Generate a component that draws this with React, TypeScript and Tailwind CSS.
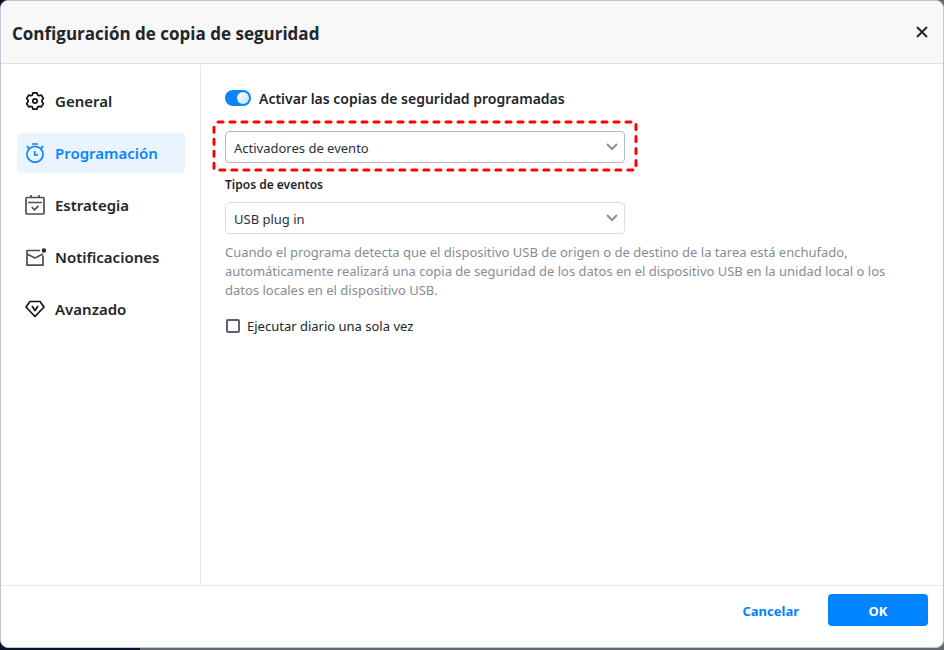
import { useState } from "react";
import type { ReactNode } from "react";
import { clsx } from "clsx";

const iconProps = {
  width: 20,
  height: 20,
  viewBox: "0 0 20 20",
  fill: "none",
  stroke: "currentColor",
  strokeWidth: 1.7,
  "aria-hidden": true,
};

const GearIcon = () => (
  <svg {...iconProps} className="text-[#111418]" strokeLinejoin="round">
    <path d="M8 1.800h4l.6 2.100 1.500.8 2.300-.5 2 3.200-1.400 1.600v2l1.400 1.600-2 3.200-2.300-.5-1.500.8-.6 2.100H8l-.6-2.100-1.500-.8-2.300.5-2-3.200L3 11V9L1.600 7.400l2-3.200 2.300.5 1.500-.8z" />
    <circle cx="10" cy="10" r="2.200" />
  </svg>
);

const TimerIcon = () => (
  <svg {...iconProps}>
    <circle cx="10" cy="11.300" r="8" />
    <path d="M7 1h6M1.800 3.200l2.700 2.600M18.200 3.200l-2.700 2.600M9.700 8v4h3.500" />
  </svg>
);

const CalendarIcon = () => (
  <svg {...iconProps} className="text-[#4a4e55]">
    <rect x="1" y="2.500" width="18" height="16.500" rx="1" />
    <path d="M3 7.500h14M6 0v3M14 0v3M6.700 12l2.800 2.800 4-4" />
  </svg>
);

const MailIcon = () => (
  <svg {...iconProps} className="overflow-visible text-[#4a4e55]">
    <path d="M15 3.500H2v14.700h16V8.500M2 7l8 4 8-4" strokeLinejoin="round" />
    <circle cx="18.900" cy="3.500" r="2.200" fill="#22262b" stroke="none" />
  </svg>
);

const DiamondIcon = () => (
  <svg {...iconProps} className="text-[#111418]" strokeLinejoin="round">
    <path d="M5 2.500h10l4 5.500-9 9.500L1 8z" />
    <path d="M7 7l3 4.500L13 7" />
  </svg>
);

const SECTIONS: { id: string; label: string; icon: ReactNode }[] = [
  { id: "general", label: "General", icon: <GearIcon /> },
  { id: "schedule", label: "Programación", icon: <TimerIcon /> },
  { id: "strategy", label: "Estrategia", icon: <CalendarIcon /> },
  { id: "notifications", label: "Notificaciones", icon: <MailIcon /> },
  { id: "advanced", label: "Avanzado", icon: <DiamondIcon /> },
];

function SelectField({ id, label, options, className }: {
  id: string;
  label?: string;
  options: string[];
  className?: string;
}) {
  return (
    <div className="relative">
      <select
        id={id}
        aria-label={label}
        className={clsx("block h-8 w-full appearance-none rounded border bg-white pl-2 pr-8 pt-1 text-[13px] text-[#2b3038]", className)}
      >
        {options.map((o) => (
          <option key={o}>{o}</option>
        ))}
      </select>
      <svg
        className="pointer-events-none absolute right-[7px] top-[10px] text-[#8a929e]"
        width="12"
        height="12"
        viewBox="0 0 12 12"
        fill="none"
        stroke="currentColor"
        strokeWidth="2"
        aria-hidden
      >
        <path d="M1 3l5 5 5-5" />
      </svg>
    </div>
  );
}

export default function App() {
  const [section, setSection] = useState("schedule");
  const [enabled, setEnabled] = useState(true);
  const [onceDaily, setOnceDaily] = useState(false);

  return (
    <div className="flex min-h-screen flex-col bg-[linear-gradient(90deg,#07122c_140px,#646974_140px)] pb-[2px] font-['Noto_Sans','Open_Sans',sans-serif] text-[#22262b]">
      <div className="flex flex-1 flex-col overflow-hidden rounded-lg border border-[#c3c5d3] bg-white">

        {/* Header */}
        <header className="flex h-[63px] items-center justify-between border-b border-[#e0e1e3] bg-[#f8f8f8] pl-[11px] pr-[15px]">
          <h1 className="pt-1 font-['Open_Sans','Noto_Sans',sans-serif] text-[17px] font-bold">Configuración de copia de seguridad</h1>
          <button type="button" aria-label="Cerrar">
            <svg width="12" height="12" viewBox="0 0 12 12" stroke="currentColor" strokeWidth="2" aria-hidden>
              <path d="M1 1l10 10M11 1L1 11" />
            </svg>
          </button>
        </header>

        <div className="flex flex-1">
          {/* Sections */}
          <nav className="mt-px flex w-[200px] shrink-0 flex-col gap-3 border-r border-[#e6e7e9] px-4 py-4">
            {SECTIONS.map((s) => (
              <button
                key={s.id}
                type="button"
                onClick={() => setSection(s.id)}
                className={clsx(
                  "flex h-10 w-[168px] items-center gap-[10px] rounded-sm pl-2 text-[15px] font-semibold",
                  section === s.id && "bg-[#eaf4ff] text-[#0a84ff]"
                )}
              >
                {s.icon}
                {s.label}
              </button>
            ))}
          </nav>

          {/* Schedule settings */}
          <main className="flex-1 px-6 pt-6">
            <label className="flex h-5 items-center gap-2 text-sm font-semibold">
              <input
                type="checkbox"
                role="switch"
                checked={enabled}
                onChange={(e) => setEnabled(e.target.checked)}
                className="relative h-4 w-[26px] appearance-none rounded-full bg-gray-300 before:absolute before:left-0.5 before:top-0.5 before:size-3 before:rounded-full before:bg-gradient-to-br before:from-white before:to-[#c3e0ff] checked:bg-[#0a84ff] checked:before:left-3"
              />
              <span className="pt-0.5">Activar las copias de seguridad programadas</span>
            </label>

            <div className="relative mt-[23px] max-w-[400px]">
              <SelectField id="trigger" label="Programación" options={["Activadores de evento"]} className="border-[#b4b9c2]" />
              {/* Highlight */}
              <div className="pointer-events-none absolute -inset-x-[11px] -inset-y-[9px]">
                <svg className="size-full overflow-visible" fill="none" stroke="#ff0000" strokeWidth="3" strokeLinecap="round" strokeDasharray="5 7" aria-hidden>
                  <rect x="0" y="0" width="100%" height="48" rx="1" strokeDashoffset="-3" />
                </svg>
              </div>
            </div>

            <div className="mt-3 flex max-w-[400px] flex-col gap-[7px]">
              <label htmlFor="event-type" className="text-xs font-semibold leading-5">Tipos de eventos</label>
              <SelectField id="event-type" options={["USB plug in"]} className="border-[#dadde3]" />
            </div>

            <p className="mt-[9px] max-w-[670px] text-[13px] leading-[19px] text-[#878c96]">
              Cuando el programa detecta que el dispositivo USB de origen o de destino de la tarea está enchufado, automáticamente realizará una copia de seguridad de los datos en el dispositivo USB en la unidad local o los datos locales en el dispositivo USB.
            </p>

            <label className="mt-4 flex h-5 w-fit items-center gap-[7px] pl-px text-[13px]">
              <input
                type="checkbox"
                checked={onceDaily}
                onChange={(e) => setOnceDaily(e.target.checked)}
                className="size-[14px] appearance-none rounded-[2px] border-2 border-[#5b6170] bg-white checked:bg-[#0a84ff]"
              />
              <span className="pt-0.5">Ejecutar diario una sola vez</span>
            </label>
          </main>
        </div>

        {/* Footer */}
        <footer className="flex h-[62px] items-start justify-end gap-[29px] border-t border-[#e6e7e9] pr-[15px] pt-2 text-[13px] font-bold">
          <button type="button" className="h-8 pt-1 text-[#0084ff]">Cancelar</button>
          <button type="button" className="h-8 w-[100px] rounded bg-[#0084ff] pt-1 text-white">OK</button>
        </footer>
      </div>
    </div>
  );
}
